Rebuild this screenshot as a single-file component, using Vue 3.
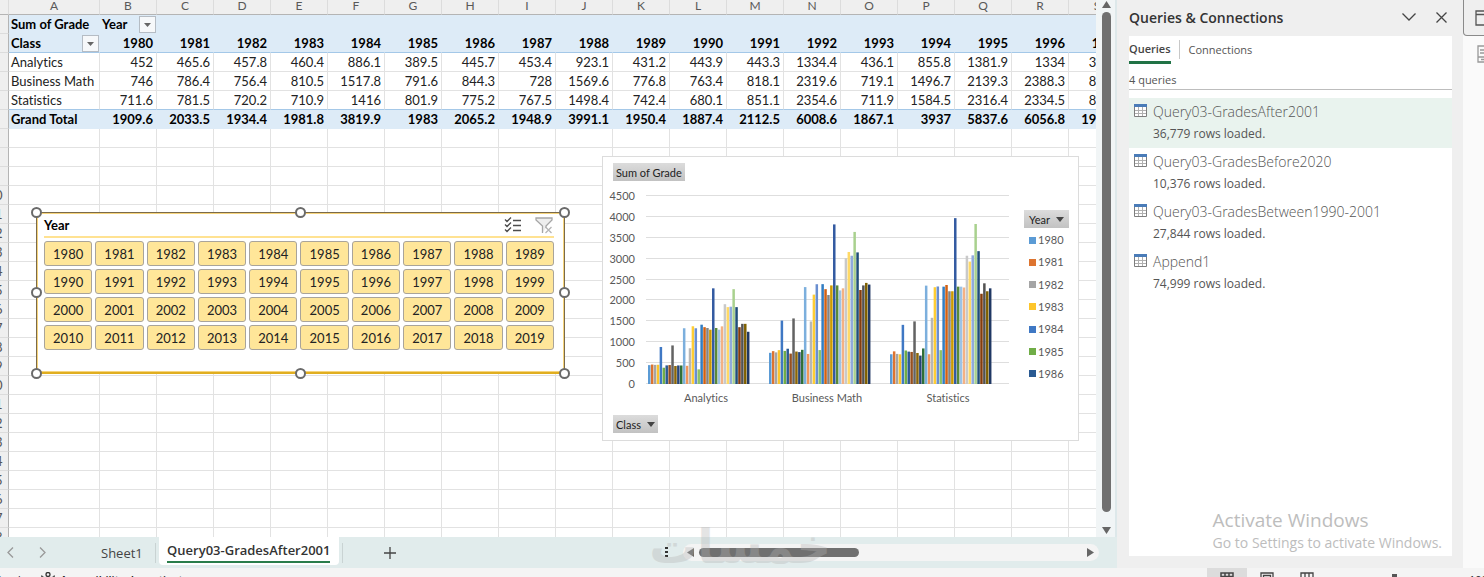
<script setup>
import { ref } from 'vue'

const columns = 'ABCDEFGHIJKLMNOPQRS'.split('')
const years = Array.from({ length: 18 }, (_, i) => 1980 + i)
const bodyRows = [
  { label: 'Analytics', values: [452, 465.6, 457.8, 460.4, 886.1, 389.5, 445.7, 453.4, 923.1, 431.2, 443.9, 443.3, 1334.4, 436.1, 855.8, 1381.9, 1334, 350.5] },
  { label: 'Business Math', values: [746, 786.4, 756.4, 810.5, 1517.8, 791.6, 844.3, 728, 1569.6, 776.8, 763.4, 818.1, 2319.6, 719.1, 1496.7, 2139.3, 2388.3, 812.4] },
  { label: 'Statistics', values: [711.6, 781.5, 720.2, 710.9, 1416, 801.9, 775.2, 767.5, 1498.4, 742.4, 680.1, 851.1, 2354.6, 711.9, 1584.5, 2316.4, 2334.5, 810.2] }
]
const totals = [1909.6, 2033.5, 1934.4, 1981.8, 3819.9, 1983, 2065.2, 1948.9, 3991.1, 1950.4, 1887.4, 2112.5, 6008.6, 1867.1, 3937, 5837.6, 6056.8, 1973.1]
const emptyRows = Array.from({ length: 22 }, (_, i) => i + 7)

const slicerYears = Array.from({ length: 40 }, (_, i) => 1980 + i)
const handles = ['nw', 'n', 'ne', 'w', 'e', 'sw', 's', 'se']

const laterYears = [
  [1420, 1360, 1340, 1300, 2290, 1340, 1300, 1380, 1910, 1840, 1850, 2270, 1840, 1360, 1440, 1440, 1250],
  [2390, 2270, 2130, 2360, 3820, 2360, 2240, 2290, 3010, 3160, 3070, 3640, 3150, 2250, 2360, 2420, 2380],
  [2330, 2370, 2220, 2220, 3970, 2330, 2330, 2310, 3070, 2930, 3080, 3830, 3180, 2160, 2410, 2220, 2290]
]
const palette = [
  '#5b9bd5', '#dd7430', '#a5a5a5', '#fdc52b', '#3f78c4', '#70ad47', '#2a5a92', '#96501f', '#636363', '#8a6608', '#264478', '#2f6f38',
  '#7cafdd', '#f1975a', '#b7b7b7', '#ffcd33', '#698ed0', '#8cc168', '#327dc2', '#d26012', '#848484', '#cc9a00', '#335aa1', '#5a8a39',
  '#9dc3e6', '#f4b183', '#c9c9c9', '#ffd966', '#8faadc', '#a9d18e', '#1f4e79', '#843c0c', '#525252', '#7f6000', '#203864'
]
const baseY = 384
const scale = 188 / 4500
const groups = bodyRows.map((row, g) => ({
  label: row.label,
  center: 706 + g * 121,
  bars: row.values.concat(laterYears[g]).map((v, i) => ({
    x: 648 + g * 121 + i * 2.91,
    y: baseY - v * scale,
    h: v * scale,
    fill: palette[i]
  }))
}))
const ticks = Array.from({ length: 10 }, (_, i) => ({ value: i * 500, y: Math.round(baseY - i * 500 * scale) - 0.5 }))
const legend = years.slice(0, 7).map((year, i) => ({ year, fill: palette[i] }))

const queries = [
  { name: 'Query03-GradesAfter2001', rows: '36,779 rows loaded.' },
  { name: 'Query03-GradesBefore2020', rows: '10,376 rows loaded.' },
  { name: 'Query03-GradesBetween1990-2001', rows: '27,844 rows loaded.' },
  { name: 'Append1', rows: '74,999 rows loaded.' }
]
const selected = ref(0)
</script>

<template>
  <div class="app">
    <div class="main">
      <section class="workbook">
        <div class="grid-row">
          <div class="sheet">
            <table class="cells">
              <colgroup>
                <col class="c-num">
                <col class="c-a">
                <col v-for="y in years" :key="y" class="c-n">
              </colgroup>
              <thead>
                <tr>
                  <th class="corner"></th>
                  <th v-for="c in columns" :key="c" class="letter" scope="col">{{ c }}</th>
                </tr>
              </thead>
              <tbody>
                <tr class="band">
                  <th class="num"><span>1</span></th>
                  <th>Sum of Grade</th>
                  <th>
                    <div class="field">Year<button class="drop" aria-label="Filter Year"><svg width="7" height="4" viewBox="0 0 7 4"><path d="M0 0h7L3.500 4z" fill="#666" /></svg></button></div>
                  </th>
                  <th v-for="y in 17" :key="y"></th>
                </tr>
                <tr class="band lined">
                  <th class="num"><span>2</span></th>
                  <th>
                    <div class="field">Class<button class="drop" aria-label="Filter Class"><svg width="7" height="4" viewBox="0 0 7 4"><path d="M0 0h7L3.500 4z" fill="#666" /></svg></button></div>
                  </th>
                  <th v-for="y in years" :key="y" class="value">{{ y }}</th>
                </tr>
                <tr v-for="(row, i) in bodyRows" :key="row.label" :class="{ lined: i === 2 }">
                  <th class="num"><span>{{ i + 3 }}</span></th>
                  <td>{{ row.label }}</td>
                  <td v-for="(v, j) in row.values" :key="j" class="value">{{ v }}</td>
                </tr>
                <tr class="band">
                  <th class="num"><span>6</span></th>
                  <th>Grand Total</th>
                  <th v-for="(v, j) in totals" :key="j" class="value">{{ v }}</th>
                </tr>
                <tr v-for="n in emptyRows" :key="n">
                  <th class="num"><span>{{ n }}</span></th>
                  <td v-for="c in columns" :key="c"></td>
                </tr>
              </tbody>
            </table>

            <div class="slicer">
              <div class="slicer-head">
                <span>Year</span>
                <div class="slicer-tools">
                  <button aria-label="Multi-select">
                    <svg width="18" height="16" viewBox="0 0 18 16" fill="none" stroke="#4d4d4d" stroke-width="1.300">
                      <path d="M1 2.500l2 2 4-4M1 7.500l2 2 4-4M1 12.500l2 2 4-4M9 3.500h8M9 8.500h8M9 13.500h8" />
                    </svg>
                  </button>
                  <button aria-label="Clear filter">
                    <svg width="18" height="17" viewBox="0 0 18 17" fill="none" stroke="#a6a6a6" stroke-width="1.300">
                      <path d="M7.500 16V9L1 3V1h16v2l-6 6v2" fill="#eee" />
                      <path d="M10.500 10l6 6M16.500 10l-6 6" stroke="#b5b5b5" />
                    </svg>
                  </button>
                </div>
              </div>
              <div class="slicer-items">
                <button v-for="y in slicerYears" :key="y">{{ y }}</button>
              </div>
              <i v-for="h in handles" :key="h" class="handle" :class="h"></i>
            </div>

            <div class="chart">
              <button class="pill">Sum of Grade</button>
              <div class="chart-body">
                <svg class="plot" width="410" height="226" viewBox="604 184 410 226">
                  <g v-for="t in ticks" :key="t.value">
                    <line x1="646" x2="1009" :y1="t.y" :y2="t.y" stroke="#dedede" />
                    <text x="635" :y="t.y + 4" text-anchor="end">{{ t.value }}</text>
                  </g>
                  <g v-for="g in groups" :key="g.label">
                    <rect v-for="(b, i) in g.bars" :key="i" :x="b.x" :y="b.y" width="2.500" :height="b.h" :fill="b.fill" />
                    <text :x="g.center" y="402" text-anchor="middle">{{ g.label }}</text>
                  </g>
                </svg>
                <div class="legend">
                  <button class="pill">Year<svg width="8" height="5" viewBox="0 0 8 5"><path d="M0 0h8L4 5z" fill="#444" /></svg></button>
                  <ul>
                    <li v-for="l in legend" :key="l.year">
                      <svg width="7" height="7"><rect width="7" height="7" :fill="l.fill" /></svg>{{ l.year }}
                    </li>
                  </ul>
                </div>
              </div>
              <button class="pill">Class<svg width="8" height="5" viewBox="0 0 8 5"><path d="M0 0h8L4 5z" fill="#444" /></svg></button>
            </div>
          </div>

          <div class="vscroll">
            <button aria-label="Scroll up"><svg width="9" height="7" viewBox="0 0 9 7"><path d="M4.500 0L9 7H0z" fill="#666" /></svg></button>
            <div class="vthumb"></div>
            <button aria-label="Scroll down"><svg width="9" height="7" viewBox="0 0 9 7"><path d="M0 0h9L4.500 7z" fill="#666" /></svg></button>
          </div>
        </div>

        <div class="tabbar">
          <button class="nav" aria-label="Previous sheet"><svg width="7" height="11" viewBox="0 0 7 11" fill="none" stroke="#999" stroke-width="1.300"><path d="M6 .5l-5 5 5 5" /></svg></button>
          <button class="nav next" aria-label="Next sheet"><svg width="7" height="11" viewBox="0 0 7 11" fill="none" stroke="#999" stroke-width="1.300"><path d="M1 .5l5 5-5 5" /></svg></button>
          <button class="tab">Sheet1</button>
          <button class="tab current"><span>Query03-GradesAfter2001</span></button>
          <i class="sep"></i>
          <button class="add" aria-label="New sheet"><svg width="12" height="12" viewBox="0 0 12 12" stroke="#444" stroke-width="1.300"><path d="M6 0v12M0 6h12" /></svg></button>
          <div class="grip"><svg width="3" height="11" viewBox="0 0 3 11" fill="#333"><path d="M0 0h3v2H0zM0 4h3v2H0zM0 8h3v2H0z" /></svg></div>
          <div class="hscroll">
            <button aria-label="Scroll left"><svg width="7" height="9" viewBox="0 0 7 9"><path d="M7 0v9L0 4.500z" fill="#666" /></svg></button>
            <div class="hthumb"></div>
            <button class="right" aria-label="Scroll right"><svg width="7" height="9" viewBox="0 0 7 9"><path d="M0 0v9l7-4.500z" fill="#666" /></svg></button>
          </div>
          <span class="brand" lang="ar" dir="rtl">خمسات</span>
        </div>
      </section>

      <aside class="pane">
        <header>
          <h2>Queries &amp; Connections</h2>
          <button aria-label="Pane options"><svg width="14" height="8" viewBox="0 0 14 8" fill="none" stroke="#444" stroke-width="1.300"><path d="M.5 .5L7 7 13.500 .5" /></svg></button>
          <button aria-label="Close"><svg width="11" height="11" viewBox="0 0 11 11" fill="none" stroke="#444" stroke-width="1.300"><path d="M.5 .5l10 10M10.500 .5l-10 10" /></svg></button>
        </header>
        <div class="panel">
          <nav>
            <button class="on">Queries</button>
            <button>Connections</button>
          </nav>
          <p class="count">4 queries</p>
          <ul class="queries">
            <li v-for="(q, i) in queries" :key="q.name" :class="{ sel: selected === i }" @click="selected = i">
              <svg width="13" height="13" viewBox="0 0 13 13">
                <path d="M.5 1.500h12v11H.5z" fill="#fff" stroke="#7d7d7d" />
                <path d="M4.500 3v9M8.500 3v9M1 6.500h11M1 9.500h11" stroke="#b0b0b0" />
                <path d="M0 0h13v3H0z" fill="#4a7cb8" />
              </svg>
              <div>
                <h3>{{ q.name }}</h3>
                <p>{{ q.rows }}</p>
              </div>
            </li>
          </ul>
          <div class="activate">
            <strong>Activate Windows</strong>
            <span>Go to Settings to activate Windows.</span>
          </div>
        </div>
      </aside>

      <div class="rail">
        <button class="rail-on" aria-label="Queries pane">
          <svg width="20" height="16" viewBox="0 0 20 16" fill="none" stroke="#555" stroke-width="1.300"><path d="M19 1H1v14h18M1 4.500h18" /></svg>
        </button>
        <button aria-label="Field list">
          <svg width="18" height="18" viewBox="0 0 18 18" fill="none" stroke="#999" stroke-width="1.300"><path d="M1 1h16v16H1zM3 5h10M3 8h10M1 12h16M4 14.500h3" /></svg>
        </button>
      </div>
    </div>

    <footer class="status">
      <span class="ready">Ready</span>
      <svg width="14" height="14" viewBox="0 0 14 14" fill="none" stroke="#333" stroke-width="1.300"><circle cx="7" cy="2.500" r="2" /><path d="M1 3.500C0 5 3 5.500 5 6v3l-2 4M13 3.500C14 5 11 5.500 9 6v3l2 4" /></svg>
      <span class="access">Accessibility: Investigate</span>
      <div class="views">
        <button class="on" aria-label="Normal view"><svg width="14" height="14" viewBox="0 0 14 14" fill="none" stroke="#444" stroke-width="1.500"><path d="M1 1h12v12H1zM5 1v12M9 1v12M1 4.500h12M1 9h12" /></svg></button>
        <button aria-label="Page layout"><svg width="14" height="14" viewBox="0 0 14 14" fill="none" stroke="#444" stroke-width="1.300"><path d="M1 1h12v12H1zM3.500 3.500h7v7h-7z" /></svg></button>
        <button aria-label="Page break preview"><svg width="14" height="14" viewBox="0 0 14 14" fill="none" stroke="#444" stroke-width="1.300"><path d="M1 1h12v12H1zM5 1v6M9 1v6M1 7h12" /></svg></button>
      </div>
      <div class="zoom"><i></i></div>
      <span class="pct">100%</span>
    </footer>
  </div>
</template>

<style>
body {
  overflow: hidden;
}
</style>

<style scoped>
* {
  box-sizing: border-box;
}
.app {
  display: flex;
  flex-direction: column;
  height: 100vh;
  overflow: hidden;
  font-family: "Open Sans", "Noto Sans", sans-serif;
  font-size: 13px;
  color: #222;
  background: #f4f4f4;
}
button {
  font: inherit;
  color: inherit;
  margin: 0;
  padding: 0;
  border: 0;
  background: none;
  display: flex;
  align-items: center;
  justify-content: center;
}
svg {
  display: block;
  flex: none;
}
h2, h3, p, ul {
  margin: 0;
  padding: 0;
  list-style: none;
}
.main {
  flex: 1;
  display: flex;
  min-height: 0;
}
.workbook {
  flex: 1;
  min-width: 0;
  display: flex;
  flex-direction: column;
  background: #e1ecec;
}
.grid-row {
  flex: 1;
  min-height: 0;
  display: flex;
}
.sheet {
  flex: 1;
  min-width: 0;
  position: relative;
  overflow: hidden;
  background: #fff;
  font-family: Lato, "Noto Sans", sans-serif;
  font-variant-ligatures: none;
}

/* cells */
.cells {
  table-layout: fixed;
  border-collapse: separate;
  border-spacing: 0;
  width: 1126px;
}
.c-num { width: 9px; }
.c-a { width: 91px; }
.c-n { width: 57px; }
.cells th,
.cells td {
  height: 19px;
  padding: 1px 3px 0 2px;
  line-height: 17px;
  border-right: 1px solid #e2e2e2;
  border-bottom: 1px solid #e2e2e2;
  text-align: left;
  white-space: nowrap;
  font-weight: 400;
}
.cells .letter,
.cells .corner {
  height: 15px;
  padding: 0 0 2px;
  font-size: 12px;
  line-height: 12px;
  text-align: center;
  color: #595959;
  background: #efefef;
  border-right-color: #dcdcdc;
  border-bottom-color: #b4b4b4;
}
.cells .value {
  text-align: right;
}
.cells .band th {
  font-weight: 700;
  color: #000;
  background: #ddebf7;
  border-color: #ddebf7;
}
.cells .lined th,
.cells .lined td {
  border-bottom-color: #a4c8e8;
}
.cells tr .num {
  padding: 1px 0 0;
  font-weight: 400;
  color: #555;
  background: #efefef;
  border-right-color: #b4b4b4;
  border-bottom-color: #dcdcdc;
  overflow: hidden;
}
.num span {
  display: block;
  width: 26px;
  margin-left: -18px;
  text-align: center;
}
.field {
  display: flex;
  align-items: center;
  justify-content: space-between;
  height: 17px;
  margin-right: -3px;
}
.drop {
  width: 17px;
  height: 17px;
  border: 1px solid #b5bcc4;
  background: #f6f8fa;
}

/* slicer */
.slicer {
  position: absolute;
  left: 36px;
  top: 212px;
  width: 529px;
  height: 162px;
  padding: 1px 10px 0 7px;
  background: #fff;
  border: 1px solid #7a6a4a;
  box-shadow: inset 0 0 0 1px #f6d47c;
  border-bottom: 2px solid #e0ae20;
}
.slicer-head {
  display: flex;
  align-items: center;
  justify-content: space-between;
  height: 24px;
  border-bottom: 2px solid #ffe292;
  font-weight: 700;
  color: #000;
  margin-bottom: 3px;
}
.slicer-tools {
  display: flex;
  gap: 13px;
  padding-right: 1px;
}
.slicer-items {
  display: grid;
  grid-template-columns: repeat(10, 1fr);
  gap: 3px;
}
.slicer-items button {
  height: 25px;
  border: 1px solid #a9a49a;
  border-radius: 3px;
  background: #ffe699;
}
.handle {
  position: absolute;
  width: 11px;
  height: 11px;
  border: 2px solid #6a6a6a;
  border-radius: 50%;
  background: #fff;
}
.nw, .n, .ne { top: -6px; }
.w, .e { top: 74px; }
.sw, .s, .se { bottom: -7px; }
.nw, .w, .sw { left: -6px; }
.n, .s { left: 258px; }
.ne, .e, .se { right: -6px; }

/* chart */
.chart {
  position: absolute;
  left: 602px;
  top: 156px;
  width: 477px;
  height: 285px;
  padding-top: 6px;
  background: #fff;
  border: 1px solid #dcdcdc;
  font-size: 11px;
}
.pill {
  height: 18px;
  margin-left: 10px;
  padding: 0 3px;
  gap: 6px;
  font-size: 11px;
  background: linear-gradient(#dcdcdc, #c2c2c2);
}
.chart-body {
  display: flex;
  height: 226px;
  margin: 3px 0 5px 1px;
}
.plot text {
  font-size: 11px;
  fill: #595959;
}
.legend {
  padding-top: 26px;
}
.legend .pill {
  margin: 0 0 0 10px;
  width: 45px;
}
.legend ul {
  height: 152px;
  margin: 3px 0 0 15px;
  display: flex;
  flex-direction: column;
  justify-content: space-between;
}
.legend li {
  display: flex;
  align-items: center;
  gap: 2px;
  line-height: 18px;
  color: #595959;
}

/* scrollbars */
.vscroll {
  width: 21px;
  padding: 1px 4px 3px 6px;
  display: flex;
  flex-direction: column;
  align-items: center;
  gap: 4px;
  background: #f1f5f6;
  border-right: 2px solid #dde8ea;
}
.vthumb {
  flex: 1;
  width: 9px;
  border-radius: 5px;
  background: #707070;
  margin-bottom: 11px;
}
.hscroll {
  display: flex;
  align-items: center;
  width: 416px;
  height: 17px;
  margin-right: 18px;
  padding: 0 5px 0 4px;
  border-radius: 9px;
  background: #f4f4f4;
}
.hthumb {
  width: 160px;
  height: 9px;
  margin-left: 5px;
  border-radius: 5px;
  background: #707070;
}
.right {
  margin-left: auto;
}

/* sheet tabs */
.tabbar {
  position: relative;
  height: 31px;
  display: flex;
  align-items: center;
  font-size: 13px;
}
.nav {
  width: 21px;
  height: 20px;
}
.next {
  margin-left: 11px;
}
.tab {
  height: 31px;
  margin-left: 36px;
  padding: 0 12px;
  color: #444;
}
.tab:not(.current) {
  height: 20px;
  margin-right: 3px;
  border-right: 1px solid #c9d3d3;
}
.current {
  align-self: flex-start;
  height: 28px;
  width: 180px;
  margin-left: 0;
  padding: 0;
  border-radius: 0 0 4px 4px;
  background: #fff;
  font-weight: 600;
  color: #333;
}
.current span {
  height: 24px;
  line-height: 22px;
  border-bottom: 2px solid #2a7d4a;
}
.sep {
  width: 1px;
  height: 20px;
  margin-left: 3px;
  background: #c9d3d3;
}
.add {
  width: 24px;
  height: 24px;
  margin-left: 35px;
}
.grip {
  margin-left: auto;
  margin-right: 15px;
}
.brand {
  position: absolute;
  right: 286px;
  bottom: 0;
  line-height: 44px;
  font-family: "DejaVu Sans", sans-serif;
  font-size: 48px;
  font-weight: 700;
  color: #b4b4b4;
  opacity: 0.350;
  pointer-events: none;
}

/* task pane */
.pane {
  width: 346px;
  padding: 0 11px 12px 12px;
  display: flex;
  flex-direction: column;
  background: #efefef;
}
.pane header {
  display: flex;
  align-items: center;
  gap: 20px;
  height: 36px;
  padding: 0 5px 2px 0;
}
.pane h2 {
  flex: 1;
  font-size: 14px;
  font-weight: 600;
  color: #333;
}
.panel {
  position: relative;
  flex: 1;
  background: #fff;
}
.pane nav {
  display: flex;
  height: 28px;
  font-size: 11px;
  color: #555;
}
.pane nav button {
  height: 28px;
}
.pane nav .on {
  font-weight: 600;
  color: #444;
  border-bottom: 3px solid #217346;
}
.pane nav button + button {
  height: 19px;
  margin: 4px 0 0 8px;
  padding-left: 9px;
  border-left: 1px solid #c8c8c8;
}
.count {
  height: 26px;
  padding-top: 7px;
  line-height: 18px;
  font-size: 11px;
  color: #555;
  border-bottom: 1px solid #bdbdbd;
}
.queries {
  padding-top: 8px;
}
.queries li {
  display: flex;
  gap: 6px;
  height: 50px;
  padding: 6px 5px;
}
.queries .sel {
  background: #e9f3ee;
}
.queries h3 {
  line-height: 16px;
  font-size: 14px;
  font-weight: 300;
  color: #555;
}
.queries p {
  margin-top: 4px;
  line-height: 20px;
  font-size: 12px;
  color: #555;
}
.activate {
  position: absolute;
  right: 10px;
  bottom: 3px;
  display: flex;
  flex-direction: column;
  color: #bdbdbd;
  font-size: 14px;
  line-height: 20px;
  white-space: nowrap;
}
.activate strong {
  font-size: 19px;
  font-weight: 400;
  line-height: 26px;
}
.rail {
  width: 21px;
  overflow: hidden;
  background: #fafafa;
}
.rail button {
  width: 40px;
  height: 36px;
  justify-content: flex-start;
  padding-left: 14px;
}
.rail .rail-on {
  padding-left: 11px;
  border: 1px solid #8a8a8a;
  border-top: 0;
  border-radius: 0 0 4px 4px;
  background: #efefef;
}

/* status bar */
.status {
  height: 9px;
  display: flex;
  align-items: flex-start;
  overflow: hidden;
  background: #f4f4f4;
  font-size: 11px;
  line-height: 24px;
  color: #222;
}
.status > svg {
  margin: 4px 5px 0 15px;
}
.ready {
  margin-left: -5px;
}
.access {
  font-weight: 600;
}
.views {
  display: flex;
  margin-left: auto;
}
.views button {
  width: 40px;
  height: 22px;
}
.views .on {
  background: #dcdcdc;
}
.zoom {
  width: 132px;
  height: 9px;
  padding-left: 65px;
}
.zoom i {
  display: block;
  width: 5px;
  height: 12px;
  margin-top: 6px;
  background: #555;
}
.pct {
  width: 25px;
  padding-left: 10px;
}
</style>
